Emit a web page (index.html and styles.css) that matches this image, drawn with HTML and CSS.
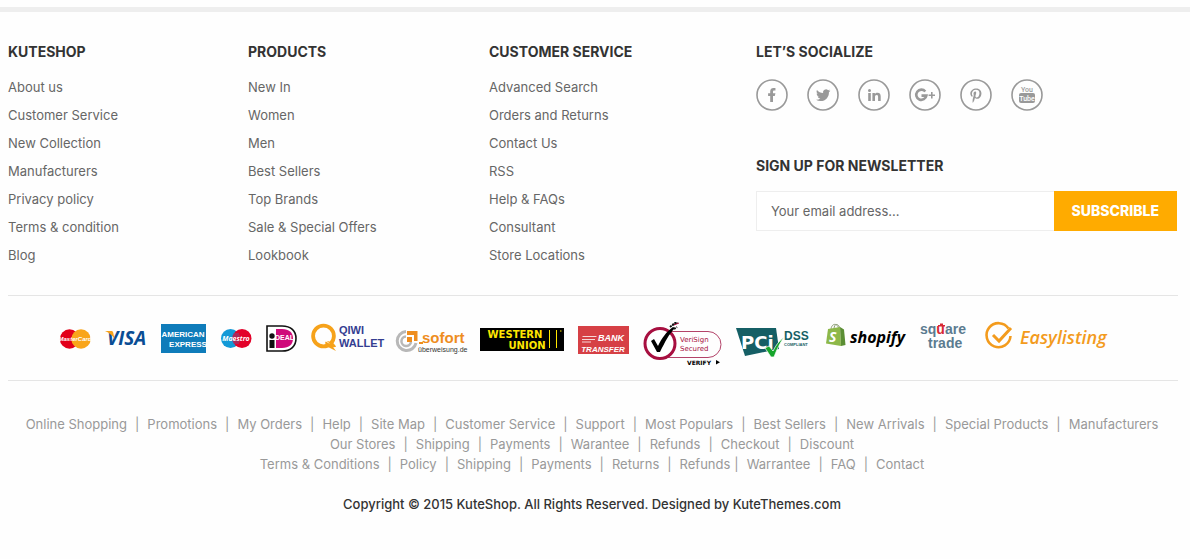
FILE: index.html
```html
<!DOCTYPE html>
<html lang="en">
<head>
<meta charset="utf-8">
<title>KuteShop</title>
<link rel="stylesheet" href="styles.css">
</head>
<body>
<footer class="footer">
  <div class="columns">
    <section class="column">
      <h2 class="title">KUTESHOP</h2>
      <ul class="links">
        <li><a href="#">About us</a></li>
        <li><a href="#">Customer Service</a></li>
        <li><a href="#">New Collection</a></li>
        <li><a href="#">Manufacturers</a></li>
        <li><a href="#">Privacy policy</a></li>
        <li><a href="#">Terms &amp; condition</a></li>
        <li><a href="#">Blog</a></li>
      </ul>
    </section>
    <section class="column">
      <h2 class="title">PRODUCTS</h2>
      <ul class="links">
        <li><a href="#">New In</a></li>
        <li><a href="#">Women</a></li>
        <li><a href="#">Men</a></li>
        <li><a href="#">Best Sellers</a></li>
        <li><a href="#">Top Brands</a></li>
        <li><a href="#">Sale &amp; Special Offers</a></li>
        <li><a href="#">Lookbook</a></li>
      </ul>
    </section>
    <section class="column">
      <h2 class="title">CUSTOMER SERVICE</h2>
      <ul class="links">
        <li><a href="#">Advanced Search</a></li>
        <li><a href="#">Orders and Returns</a></li>
        <li><a href="#">Contact Us</a></li>
        <li><a href="#">RSS</a></li>
        <li><a href="#">Help &amp; FAQs</a></li>
        <li><a href="#">Consultant</a></li>
        <li><a href="#">Store Locations</a></li>
      </ul>
    </section>
    <section class="column">
      <h2 class="title">LET’S SOCIALIZE</h2>
      <div class="social">
        <a href="#" aria-label="Facebook"><svg viewBox="0 0 32 32"><circle class="ring" cx="16" cy="16" r="15"/><path transform="translate(7.200 7.600) scale(.7)" d="M14 13.500h2.500l1-4H14v-2c0-1.030 0-2 2-2h1.500V2.140C17.170 2.100 15.940 2 14.640 2 11.930 2 10 3.660 10 6.700v2.800H7v4h3V22h4z"/></svg></a>
        <a href="#" aria-label="Twitter"><svg viewBox="0 0 32 32"><circle class="ring" cx="16" cy="16" r="15"/><path transform="translate(9 9) scale(.6)" d="M23.953 4.570a10 10 0 01-2.825.775 4.958 4.958 0 002.163-2.723c-.951.555-2.005.959-3.127 1.184a4.920 4.920 0 00-8.384 4.482C7.690 8.095 4.067 6.130 1.640 3.162a4.822 4.822 0 00-.666 2.475c0 1.710.870 3.213 2.188 4.096a4.904 4.904 0 01-2.228-.616v.060a4.923 4.923 0 003.946 4.827 4.996 4.996 0 01-2.212.085 4.936 4.936 0 004.604 3.417 9.867 9.867 0 01-6.102 2.105c-.390 0-.779-.023-1.170-.067a13.995 13.995 0 007.557 2.209c9.053 0 13.998-7.496 13.998-13.985 0-.210 0-.420-.015-.630A9.935 9.935 0 0024 4.590z"/></svg></a>
        <a href="#" aria-label="LinkedIn"><svg viewBox="0 0 32 32"><circle class="ring" cx="16" cy="16" r="15"/><circle cx="11.500" cy="11.400" r="1.500"/><path d="M10.200 14h2.600v8h-2.600zM14.400 14h2.500v1.100c.5-.8 1.400-1.300 2.600-1.300 2.400 0 3.200 1.500 3.200 3.700V22h-2.600v-4.100c0-1.100-.2-2-1.400-2s-1.700.8-1.700 2V22h-2.600z"/></svg></a>
        <a href="#" aria-label="Google Plus"><svg viewBox="0 0 32 32"><circle class="ring" cx="16" cy="16" r="15"/><path fill="none" stroke="#999" stroke-width="2.600" d="M16.300 12.500A5.100 5.100 0 1 0 17.400 16.600H12.500"/><path d="M22 13h1.600v2.400h2.400v1.600h-2.400v2.400h-1.600v-2.400h-2.400v-1.600h2.400z"/></svg></a>
        <a href="#" aria-label="Pinterest"><svg viewBox="0 0 32 32"><circle class="ring" cx="16" cy="16" r="15"/><path transform="translate(10.300 9.200) scale(.029)" d="M204 6.500C101.400 6.500 0 74.900 0 185.600 0 256 39.600 296 63.600 296c9.900 0 15.600-27.600 15.600-35.400 0-9.300-23.700-29.100-23.700-67.800 0-80.400 61.200-137.400 140.400-137.400 68.100 0 118.500 38.700 118.500 109.800 0 53.100-21.300 152.700-90.300 152.700-24.900 0-46.200-18-46.200-43.800 0-37.800 26.400-74.400 26.400-113.400 0-66.200-93.900-54.200-93.900 25.800 0 16.800 2.100 35.400 9.600 50.700-13.800 59.400-42 147.900-42 209.100 0 18.900 2.700 37.500 4.500 56.400 3.400 3.800 1.700 3.400 6.900 1.500 50.400-69 48.600-82.500 71.400-172.800 12.300 23.400 44.100 36 69.300 36 106.200 0 153.900-103.500 153.900-196.800C384 71.300 298.200 6.500 204 6.500z"/></svg></a>
        <a href="#" aria-label="YouTube"><svg viewBox="0 0 32 32"><circle class="ring" cx="16" cy="16" r="15"/><rect x="8" y="14" width="16" height="10" rx="2"/><text class="tube" x="16" y="13">You</text><text class="tube tube-light" x="16" y="22">Tube</text></svg></a>
      </div>
      <h2 class="title">SIGN UP FOR NEWSLETTER</h2>
      <form class="newsletter">
        <input class="email" type="email" aria-label="Your email address" placeholder="Your email address...">
        <button class="subscribe" type="button">SUBSCRIBLE</button>
      </form>
    </section>
  </div>

  <div class="payments">
    <svg width="32" height="48" viewBox="0 0 32 48" role="img" aria-label="MasterCard"><circle cx="10.500" cy="23" r="9.700" fill="#e2001a"/><circle cx="22" cy="23" r="9.700" fill="#f9a51a"/><text x="16" y="25" font-size="6" class="logo-h mid" fill="#fff">MasterCard</text></svg>
    <svg width="42" height="48" viewBox="0 0 42 48" role="img" aria-label="Visa"><text x="2" y="29" font-size="19" class="logo-i" fill="#0a4d94">VISA</text><path d="M0 15h6c1.500 0 2 .6 2.300 2l1.200 6C7.500 19.500 4.500 17 0 15z" fill="#f6a21b"/></svg>
    <svg width="45" height="48" viewBox="0 0 45 48" role="img" aria-label="American Express"><path fill="#0f7cba" d="M0 8h45v29H0z"/><text x="22" y="21" font-size="8" class="logo-s mid amex">AMERICAN</text><text x="27" y="31" font-size="8" class="logo-s mid amex">EXPRESS</text></svg>
    <svg width="32" height="48" viewBox="0 0 32 48" role="img" aria-label="Maestro"><circle cx="10.500" cy="22.500" r="9.500" fill="#139ad7"/><circle cx="22" cy="22.500" r="9.500" fill="#e3022a"/><path d="M13 18h6M12 20h8M12 25h8M13 27h6" stroke="#7a4d87"/><text x="16" y="25" font-size="7" class="logo-i mid" fill="#fff">Maestro</text></svg>
    <svg width="31" height="48" viewBox="0 0 31 48" role="img" aria-label="iDEAL"><path fill="#fff" stroke="#111" stroke-width="1.600" d="M1 10h15c9 0 14 5 14 12.500S25 35 16 35H1z"/><path fill="#cf0a7b" d="M10 13h6c7 0 11 3.500 11 9.500S23 32 16 32h-6z"/><circle cx="6" cy="20" r="2.700" fill="#111"/><path fill="#111" d="M3.500 24h5v8h-5z"/><text x="9" y="24" font-size="7" class="logo-s" fill="#fff">DEAL</text></svg>
    <svg width="71" height="48" viewBox="0 0 71 48" role="img" aria-label="Qiwi Wallet"><circle cx="12.500" cy="20" r="10.400" fill="none" stroke="#f6a21a" stroke-width="3.800"/><path d="M15 25c4 0 9 2 10 6-2 0-2 .5-3 0l3 4-8-4-3-4z" fill="#f6a21a"/><path d="M14 25l5 3-3-3z" fill="#fff"/><text x="28" y="18" font-size="11" class="logo-s" fill="#343d91">QIWI</text><text x="28" y="31" font-size="11" class="logo-s" fill="#343d91">WALLET</text></svg>
    <svg width="70" height="48" viewBox="0 0 70 48" role="img" aria-label="Sofort Überweisung"><path d="M10 15.500A9.500 9.500 0 1 0 20 27" fill="none" stroke="#b8b8b8" stroke-width="3"/><path d="M10 20.500A4.800 4.800 0 1 0 15 26" fill="none" stroke="#b8b8b8" stroke-width="2.500"/><path d="M11 15h10.500v10H18v-6h-7zM11 21h5v5h-5z" fill="#ee8d1e"/><path d="M23 27h4" stroke="#ee8d1e" stroke-width="2"/><text x="26" y="27" font-size="15" class="logo-s" fill="#ee8d1e">sofort</text><text x="22" y="36" font-size="7" class="logo-l" fill="#333">überweisung.de</text></svg>
    <svg width="84" height="48" viewBox="0 0 84 48" role="img" aria-label="Western Union"><path d="M0 12h84v23H0z"/><text x="35" y="22" font-size="10" class="logo-w mid" fill="#ffe600">WESTERN</text><text x="47" y="33" font-size="10" class="logo-w mid" fill="#ffe600">UNION</text><path d="M69.500 14v18M76.500 14v18" stroke="#ffe600" stroke-width="1"/><path d="M80 15h1.500" stroke="#ffe600"/></svg>
    <svg width="51" height="48" viewBox="0 0 51 48" role="img" aria-label="Bank Transfer"><path fill="#d64045" d="M0 10h51v28H0z"/><path d="M4.500 20.500h14M4 23.500h13M4 26h9" stroke="#fff" stroke-width=".8"/><text x="20" y="25" font-size="9" class="logo-h" fill="#fff">BANK</text><text x="25" y="36" font-size="8" class="logo-h mid" fill="#fff">TRANSFER</text></svg>
    <svg width="79" height="48" viewBox="0 0 79 48" role="img" aria-label="VeriSign Secured"><path d="M23 15.500h42a13 13 0 0 1 0 26H25" fill="none" stroke="#b34369"/><circle cx="17" cy="27.500" r="15" fill="#fff" stroke="#a70f40" stroke-width="3"/><path d="M8 25l3-2 4 7c4-8 8-14 15-19l2 1c-6 6-10 14-15 24h-3z"/><path d="M27 11l5-4 3 0M31 13l3-2" stroke="#111" stroke-width="2" stroke-dasharray="2 1"/><path d="M31 9l5-2" stroke="#a70f40"/><text x="37" y="26" font-size="7" class="logo-v" fill="#a70f40">VeriSign</text><text x="37" y="35" font-size="7" class="logo-v" fill="#a70f40">Secured</text><text x="44" y="49" font-size="6" class="logo-w">VERIFY</text><path d="M73 44l4 2.200-4 2.200z"/></svg>
    <svg width="76" height="48" viewBox="0 0 76 48" role="img" aria-label="PCI DSS Compliant"><path fill="#155f65" d="M0 12l40 0 3 21-34 7z"/><text x="5" y="33" font-size="18" class="logo-w" fill="#fff">PCi</text><path d="M29 32l4-2 4 5c3-6 6-10 11-14-4 6-7 12-10 20h-3z" fill="#16a52b" stroke="#fff" stroke-width=".7"/><text x="48" y="24" font-size="12" class="logo-s" fill="#155f65">DSS</text><text x="48" y="30" font-size="4" class="logo-s" fill="#155f65">COMPLIANT</text></svg>
    <svg width="80" height="48" viewBox="0 0 80 48" role="img" aria-label="Shopify"><path d="M5 14c0-7 7-8 8 0M8 13c0-6 5-6 6 0" fill="none" stroke="#8a9c72"/><path fill="#8db849" d="M2 13l12-2 1 19-15-2.500z"/><path fill="#5b8e34" d="M14 11l4 2.500 1.500 15.500-4.500 1z"/><text x="3" y="26" font-size="14" class="logo-i" fill="#fff">S</text><text x="24" y="27" font-size="16" class="logo-i">shopify</text></svg>
    <svg width="51" height="48" viewBox="0 0 51 48" role="img" aria-label="Square Trade"><text x="0" y="18" font-size="14" class="logo-s" fill="#5b7b90">sq<tspan fill="#d72834">u</tspan>are</text><path d="M18 10.500V9h2V7.500h3V9h2v1.500z" fill="#d72834"/><text x="8" y="32" font-size="14" class="logo-s" fill="#5b7b90">trade</text></svg>
    <svg width="124" height="48" viewBox="0 0 124 48" role="img" aria-label="Easylisting"><path d="M23.500 12.500A12 12 0 1 0 25.500 20" fill="none" stroke="#f39b1d" stroke-width="2.600"/><path d="M8 19l6 6 12-13" fill="none" stroke="#f39b1d" stroke-width="3"/><text x="35" y="28" font-size="18" class="easy" fill="#f39b1d">Easylisting</text></svg>
  </div>

  <nav class="sitemap" aria-label="Site links">
    <div class="line"><a href="#">Online Shopping</a><span>|</span><a href="#">Promotions</a><span>|</span><a href="#">My Orders</a><span>|</span><a href="#">Help</a><span>|</span><a href="#">Site Map</a><span>|</span><a href="#">Customer Service</a><span>|</span><a href="#">Support</a><span>|</span><a href="#">Most Populars</a><span>|</span><a href="#">Best Sellers</a><span>|</span><a href="#">New Arrivals</a><span>|</span><a href="#">Special Products</a><span>|</span><a href="#">Manufacturers</a></div>
    <div class="line"><a href="#">Our Stores</a><span>|</span><a href="#">Shipping</a><span>|</span><a href="#">Payments</a><span>|</span><a href="#">Warantee</a><span>|</span><a href="#">Refunds</a><span>|</span><a href="#">Checkout</a><span>|</span><a href="#">Discount</a></div>
    <div class="line"><a href="#">Terms &amp; Conditions</a><span>|</span><a href="#">Policy</a><span>|</span><a href="#">Shipping</a><span>|</span><a href="#">Payments</a><span>|</span><a href="#">Returns</a><span>|</span><a href="#">Refunds</a><span class="tight">|</span><a href="#">Warrantee</a><span>|</span><a href="#">FAQ</a><span>|</span><a href="#">Contact</a></div>
  </nav>
  <p class="copyright">Copyright © 2015 KuteShop. All Rights Reserved. Designed by KuteThemes.com</p>
</footer>
</body>
</html>
```
FILE: styles.css
```css
* { box-sizing: border-box; }
body {
  margin: 0;
  padding-top: 7px;
  background: #fefefe;
  color: #666;
  font: 13px/20px Inter, "Liberation Sans", sans-serif;
}
a { color: inherit; text-decoration: none; }
.footer { border-top: 5px solid #eee; padding: 30px 12px 36px 8px; }
.columns {
  display: grid;
  grid-template-columns: 240fr 241fr 267fr 422fr;
  padding-bottom: 26px;
  border-bottom: 1px solid #e5e5e5;
}
.title { margin: 0; font-size: 14px; line-height: 20px; font-weight: 700; color: #333; }
.links { list-style: none; margin: 11px 0 0; padding: 0; line-height: 28px; }
.social { display: flex; gap: 19px; margin: 17px 0 45px; }
.social a { display: block; height: 32px; }
.social svg { display: block; width: 32px; height: 32px; fill: #999; }
.ring { fill: none; stroke: #999; stroke-width: 1.6px; }
.tube { font: 500 7px Roboto, sans-serif; text-anchor: middle; }
.tube-light { fill: #fff; }
.newsletter { display: flex; margin: 15px 0 0; padding-right: 1px; }
.email {
  flex: 1;
  min-width: 0;
  height: 40px;
  padding: 0 14px;
  border: 1px solid #eee;
  border-right: 0;
  border-radius: 0;
  background: #fff;
  color: #666;
  font: inherit;
}
.email::placeholder { color: #666; opacity: 1; }
.subscribe {
  height: 40px;
  padding: 0 18px;
  border: 0;
  background: #ffab00;
  color: #fff;
  font: 800 14px/20px Inter, sans-serif;
}
.payments {
  display: flex;
  justify-content: center;
  gap: 14px;
  padding: 20px 18px 16px 0;
  border-bottom: 1px solid #e5e5e5;
}
.payments svg { flex: none; overflow: visible; }
.mid { text-anchor: middle; }
.logo-i { font-family: "Open Sans", sans-serif; font-weight: 700; font-style: italic; }
.logo-l { font-family: "Liberation Sans", sans-serif; }
.logo-s { font-family: "Liberation Sans", sans-serif; font-weight: 700; }
.logo-h { font-family: "Liberation Sans", sans-serif; font-weight: 700; font-style: italic; }
.logo-v { font-family: "DejaVu Sans", sans-serif; }
.logo-w { font-family: "DejaVu Sans", sans-serif; font-weight: 700; }
.amex { fill: #fff; }
.easy { font-family: "Open Sans", sans-serif; font-weight: 600; font-style: italic; }
.sitemap { padding: 33px 2px 0 0; color: #999; }
.line { display: flex; flex-wrap: wrap; justify-content: center; gap: 0 8px; }
.tight { margin-left: -4px; }
.copyright { margin: 20px 2px 0 0; text-align: center; font-weight: 500; color: #333; }
```
